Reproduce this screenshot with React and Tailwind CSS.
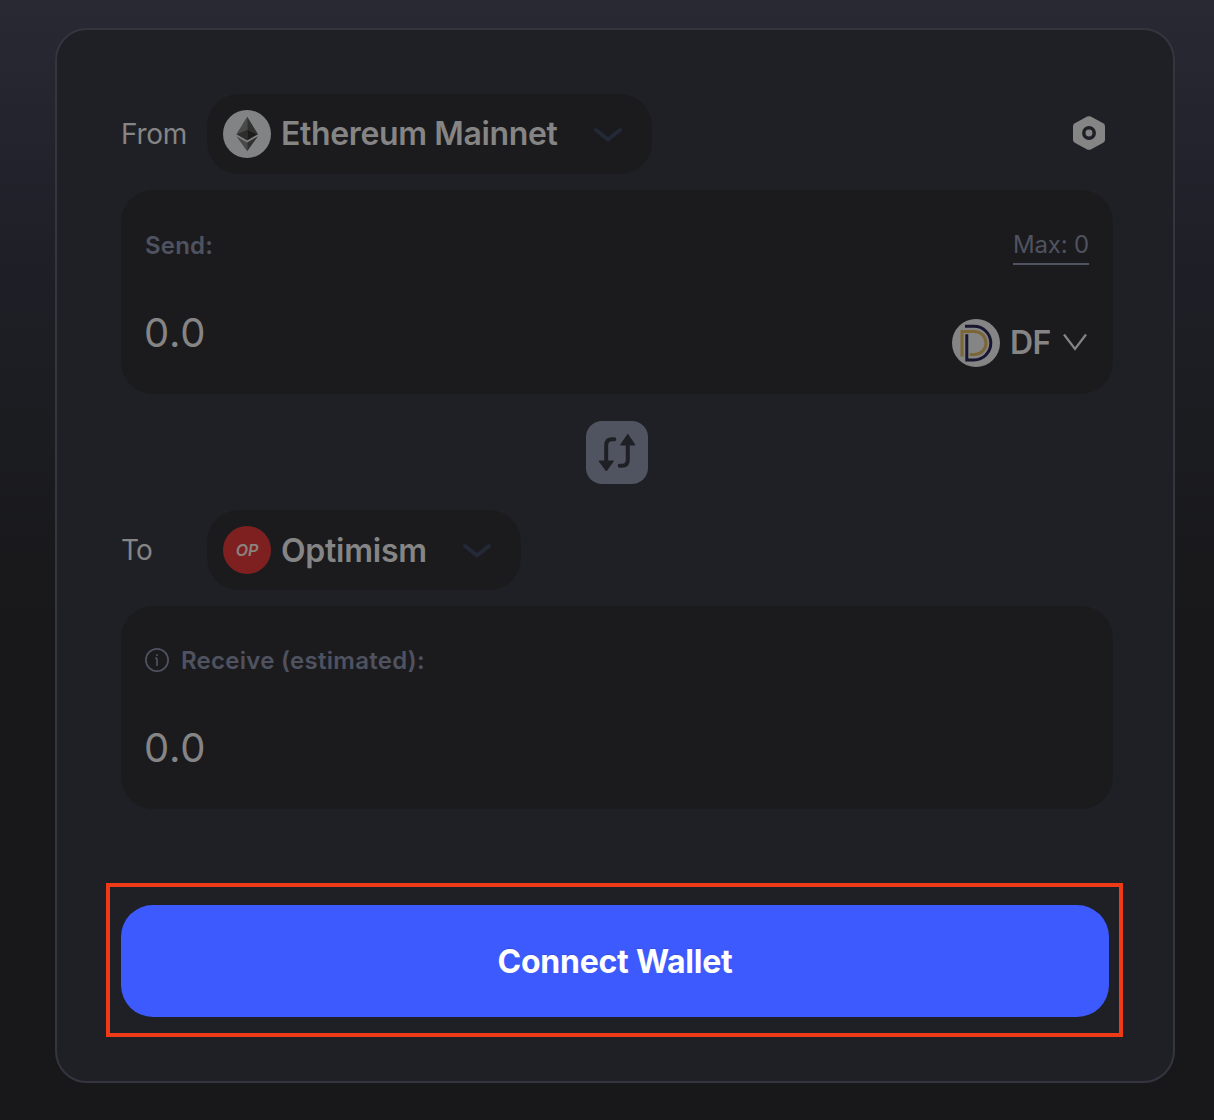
import React from "react";

function EthereumIcon() {
  return (
    <svg className="h-12 w-12 shrink-0" viewBox="0 0 48 48">
      <circle cx="24" cy="24" r="24" fill="#828385" />
      <path d="M24.2 6.7 13.4 24.2 24.2 19.4Z" fill="#494948" />
      <path d="M24.2 6.7 35 24.2 24.2 19.4Z" fill="#2f302f" />
      <path d="M24.2 19.4 13.4 24.2 24.2 30.4Z" fill="#2d2d2c" />
      <path d="M24.2 19.4 35 24.2 24.2 30.4Z" fill="#1c1c1b" />
      <path d="M13.4 26.2 24.2 32.5V41.3Z" fill="#494948" />
      <path d="M35 26.2 24.2 32.5V41.3Z" fill="#2f302f" />
    </svg>
  );
}

function OptimismIcon() {
  return (
    <div className="flex h-12 w-12 shrink-0 items-center justify-center rounded-full bg-[#7f2020] text-[16px] leading-none font-semibold text-[#8a8380] italic">
      OP
    </div>
  );
}

function TokenIcon() {
  return (
    <svg className="h-12 w-12 shrink-0" viewBox="0 0 48 48" fill="none" strokeWidth="3">
      <circle cx="24" cy="24" r="24" fill="#858585" />
      <path d="M10 37.5V12.5H22.5A11.5 11.5 0 0 1 22.5 35.5H17.8" stroke="#7c6638" />
      <path d="M13 7.3H22A16.8 16.8 0 0 1 22 40.9H14.8V15.3" stroke="#17152f" />
    </svg>
  );
}

function Chevron() {
  return (
    <svg className="h-[18px] w-8 shrink-0" viewBox="0 0 32 18" fill="none">
      <path d="M4 5 16 14.5 28 5" stroke="#232937" strokeWidth="4" strokeLinecap="round" strokeLinejoin="round" />
    </svg>
  );
}

function NetworkSelect({ icon, name, className, nameClassName }) {
  return (
    <button className={`flex h-20 items-center rounded-[32px] bg-[#1b1b1d] pl-4 ${className}`}>
      {icon}
      <span className={`ml-[10px] text-[32px] leading-10 font-semibold whitespace-nowrap text-[#858585] ${nameClassName}`}>
        {name}
      </span>
      <span className="mr-[28px] ml-auto">
        <Chevron />
      </span>
    </button>
  );
}

export default function App() {
  return (
    <div className="h-[1120px] w-[1214px] overflow-hidden bg-[#18181a] bg-linear-to-b from-[#292933] via-[#1f2028] via-20% to-[#18181a] to-55% pt-7 pl-[55px] font-['Inter',sans-serif]">
      <div className="relative flex h-[1055px] w-[1120px] flex-col rounded-[32px] border-2 border-[#353540] bg-[#1f2026] pt-16 pr-[60px] pl-16">
        <div className="flex h-20 items-center">
          <span className="w-[86px] text-[28px] leading-8 tracking-[-0.25px] text-[#858585]">From</span>
          <NetworkSelect
            icon={<EthereumIcon />}
            name="Ethereum Mainnet"
            className="w-[445px]"
            nameClassName="tracking-[-0.37px]"
          />
          <svg className="mr-2 mb-[2px] ml-auto h-[34px] w-8" viewBox="0 0 32 34">
            <path
              d="M14.2.6Q16-.3 17.8.6L30.2 7.2Q32 8.2 32 10.2V23.8Q32 25.8 30.2 26.8L17.8 33.4Q16 34.3 14.2 33.4L1.8 26.8Q0 25.8 0 23.8V10.2Q0 8.2 1.8 7.2Z"
              fill="#858585"
            />
            <circle cx="16" cy="17" r="5.2" fill="#858585" stroke="#1f2026" strokeWidth="3.5" />
          </svg>
        </div>

        <div className="mt-4 flex h-[204px] shrink-0 flex-col rounded-[32px] bg-[#1b1b1d] px-6 pt-[38px]">
          <div className="flex items-start justify-between text-[24px] leading-8 text-[#4f5260]">
            <span className="mt-[2px] font-semibold tracking-[0.2px]">Send:</span>
            <span className="h-[37px] border-b-2 border-[#4f5260] pt-px tracking-[-0.17px]">Max: 0</span>
          </div>
          <div className="mt-[42px] flex items-start justify-between">
            <span className="-ml-px text-[40px] leading-[52px] tracking-[0.8px] text-[#858585]">0.0</span>
            <div className="mt-3 flex items-center">
              <TokenIcon />
              <span className="ml-[10px] text-[32px] leading-10 font-semibold tracking-[-0.4px] text-[#858585]">DF</span>
              <svg className="mr-[2px] mb-[2px] ml-3 h-[18px] w-6" viewBox="0 0 24 18" fill="none">
                <path d="M1 1.5 12 16 23 1.5" stroke="#858585" strokeWidth="2.2" />
              </svg>
            </div>
          </div>
        </div>

        <button className="mt-[26.5px] ml-[465px] flex h-[63px] w-[62px] items-center justify-center rounded-2xl bg-[#505460]">
          <svg className="h-[62px] w-[62px]" viewBox="0 0 62 62" fill="none">
            <path d="M28.3 18.3H26Q20.2 18.3 20.2 24.3V41" stroke="#1f2026" strokeWidth="4" strokeLinecap="round" />
            <path d="M33.7 44.7H36Q41.8 44.7 41.8 38.7V23" stroke="#1f2026" strokeWidth="4" strokeLinecap="round" />
            <path d="M13 40H27.5L20.3 50ZM34.5 24H49L41.8 13.2Z" fill="#1f2026" stroke="#1f2026" strokeLinejoin="round" />
          </svg>
        </button>

        <div className="mt-[26.5px] flex h-20 items-center">
          <span className="w-[86px] text-[28px] leading-8 tracking-[-0.9px] text-[#858585]">To</span>
          <NetworkSelect
            icon={<OptimismIcon />}
            name="Optimism"
            className="w-[314px]"
            nameClassName="pt-[2px] tracking-[-0.25px]"
          />
        </div>

        <div className="mt-4 flex h-[203px] flex-col rounded-[32px] bg-[#1b1b1d] px-6 pt-[38px]">
          <div className="flex h-8 items-center text-[24px] leading-8 font-semibold text-[#4f5260]">
            <svg className="mr-3 h-6 w-6" viewBox="0 0 24 24" fill="none">
              <circle cx="12" cy="12" r="11.1" stroke="#4f5260" strokeWidth="1.7" />
              <path d="M12 10.2V18M10.2 10.2H12M12 6.2V8" stroke="#4f5260" strokeWidth="1.7" />
            </svg>
            <span className="pt-[2px] tracking-[0.27px]">Receive (estimated):</span>
          </div>
          <span className="mt-[46px] -ml-px text-[40px] leading-[52px] tracking-[0.8px] text-[#858585]">0.0</span>
        </div>

        <button className="mt-24 h-28 w-[988px] rounded-[32px] bg-[#3d5aff] pt-[2px] text-[32px] font-bold tracking-[-0.25px] text-white [text-shadow:0_-1px_0_rgba(0,0,0,0.12)]">
          Connect Wallet
        </button>
        <div className="pointer-events-none absolute top-[853px] left-[49px] h-[154px] w-[1017px] border-4 border-[#ed3b17]" />
      </div>
    </div>
  );
}
